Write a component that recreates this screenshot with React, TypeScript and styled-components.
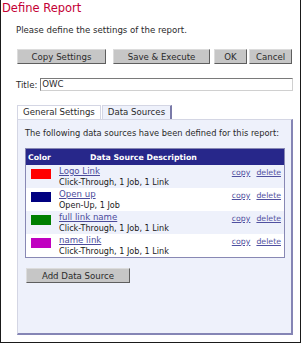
import styled, { createGlobalStyle } from "styled-components";

const Global = createGlobalStyle`
  html, body {
    margin: 0;
    padding: 0;
    background: #ffffff;
  }
  body {
    font-family: "DejaVu Sans", Verdana, sans-serif;
    font-size: 8.6px;
    color: #2a2a2a;
  }
`;

const Window = styled.div`
  width: 301px;
  height: 343px;
  box-sizing: border-box;
  border: 1px solid #1a1a1a;
  border-top: none;
  display: flex;
  flex-direction: column;
`;

const Heading = styled.h1`
  margin: 0;
  padding: 1px 0 0 1px;
  font-size: 11.5px;
  font-weight: normal;
  color: #c40035;
  line-height: 14px;
`;

const Body = styled.div`
  padding: 0 7px 0 15px;
  display: flex;
  flex-direction: column;
`;

const Intro = styled.p`
  margin: 10px 0 0 0;
  line-height: 10px;
`;

const ButtonRow = styled.div`
  display: flex;
  margin-top: 14px;
  padding-left: 1px;
`;

const Button = styled.button<{ $w: number; $ml?: number }>`
  width: ${(p) => p.$w}px;
  height: 15px;
  margin-left: ${(p) => p.$ml ?? 0}px;
  padding: 0;
  font-family: inherit;
  font-size: 8.6px;
  color: #2a2a2a;
  background: #c6c6c6;
  border: 1px solid;
  border-color: #dcdcdc #5e5e5e #5e5e5e #dcdcdc;
  box-sizing: border-box;
`;

const TitleRow = styled.div`
  display: flex;
  align-items: center;
  gap: 3px;
  margin-top: 14px;
`;

const TitleInput = styled.div`
  flex: 1;
  height: 13px;
  box-sizing: border-box;
  border: 1px solid #7a7a7a;
  border-right-color: #d0d0d0;
  border-bottom-color: #d0d0d0;
  padding: 0 1px;
  line-height: 11px;
`;

const Tabs = styled.div`
  display: flex;
  margin-top: 14px;
  padding-left: 1px;
`;

const Tab = styled.div<{ $active?: boolean }>`
  height: 14px;
  box-sizing: border-box;
  padding: 0 5px;
  line-height: 13px;
  background: ${(p) => (p.$active ? "#eef1fb" : "#ffffff")};
  border: 1px solid #d4d6e4;
  border-bottom: none;
  border-right: ${(p) => (p.$active ? "2px solid #7a7aa8" : "1px solid #d4d6e4")};
  margin-right: 1px;
`;

const Panel = styled.div`
  height: 216px;
  margin-left: 1px;
  box-sizing: border-box;
  background: #eef1fb;
  border: 1px solid #d4d6e4;
  border-right: 2px solid #8585b5;
  border-bottom: 2px solid #8585b5;
  padding: 8px 6px 0 7px;
`;

const PanelText = styled.p`
  margin: 0;
  line-height: 10px;
  font-size: 8.3px;
  white-space: nowrap;
`;

const Table = styled.div`
  margin-top: 10px;
  border: 1px solid #8888b4;
  background: #ffffff;
`;

const HeaderRow = styled.div`
  display: flex;
  height: 16px;
  align-items: center;
  background: #27278a;
  color: #ffffff;
  font-weight: bold;
  font-size: 7.8px;
  padding-left: 2px;
`;

const HeadColor = styled.span`
  width: 62px;
`;

const Row = styled.div<{ $tint: boolean }>`
  display: flex;
  height: 23px;
  background: ${(p) => (p.$tint ? "#eef1fb" : "#ffffff")};
  padding: 1px 3px 0 5px;
  box-sizing: border-box;
`;

const Swatch = styled.span<{ $c: string }>`
  width: 20px;
  height: 10px;
  margin-top: 3px;
  background: ${(p) => p.$c};
  flex: none;
`;

const Desc = styled.div`
  flex: 1;
  display: flex;
  flex-direction: column;
  margin-left: 8px;
`;

const NameLink = styled.a`
  color: #4b4b9b;
  text-decoration: underline;
  font-size: 8.6px;
  line-height: 11px;
`;

const Sub = styled.span`
  color: #1a1a1a;
  font-size: 8.1px;
  line-height: 10px;
`;

const Actions = styled.div`
  display: flex;
  gap: 6px;
  line-height: 11px;
  padding-top: 1px;
`;

const ActionLink = styled.a`
  color: #5050a0;
  text-decoration: underline;
  font-size: 7.8px;
`;

const AddButton = styled(Button)`
  margin-top: 10px;
  margin-left: 1px;
`;

const sources = [
  { name: "Logo Link", sub: "Click-Through, 1 Job, 1 Link", color: "#ff0000" },
  { name: "Open up", sub: "Open-Up, 1 Job", color: "#000080" },
  { name: "full link name", sub: "Click-Through, 1 Job, 1 Link", color: "#008000" },
  { name: "name link", sub: "Click-Through, 1 Job, 1 Link", color: "#c000c0" },
];

export default function App() {
  return (
    <>
      <Global />
      <Window>
        <Heading>Define Report</Heading>
        <Body>
          <Intro>Please define the settings of the report.</Intro>
          <ButtonRow>
            <Button $w={89}>Copy Settings</Button>
            <Button $w={97} $ml={7}>Save &amp; Execute</Button>
            <Button $w={33} $ml={4}>OK</Button>
            <Button $w={43} $ml={2}>Cancel</Button>
          </ButtonRow>
          <TitleRow>
            <span>Title:</span>
            <TitleInput>OWC</TitleInput>
          </TitleRow>
          <Tabs>
            <Tab>General Settings</Tab>
            <Tab $active>Data Sources</Tab>
          </Tabs>
          <Panel>
            <PanelText>The following data sources have been defined for this report:</PanelText>
            <Table>
              <HeaderRow>
                <HeadColor>Color</HeadColor>
                <span>Data Source Description</span>
              </HeaderRow>
              {sources.map((s, i) => (
                <Row key={s.name} $tint={i % 2 === 0}>
                  <Swatch $c={s.color} />
                  <Desc>
                    <NameLink href="#">{s.name}</NameLink>
                    <Sub>{s.sub}</Sub>
                  </Desc>
                  <Actions>
                    <ActionLink href="#">copy</ActionLink>
                    <ActionLink href="#">delete</ActionLink>
                  </Actions>
                </Row>
              ))}
            </Table>
            <AddButton $w={104}>Add Data Source</AddButton>
          </Panel>
        </Body>
      </Window>
    </>
  );
}
